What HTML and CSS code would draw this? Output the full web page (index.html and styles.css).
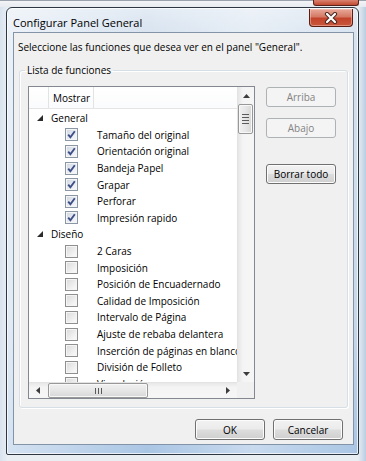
FILE: index.html
```html
<!DOCTYPE html>
<html lang="es">
  <head>
    <meta charset="UTF-8" />
    <title>Configurar Panel General</title>
    <link rel="stylesheet" href="styles.css">
  </head>
  <body>
    <div class="backbar"><span class="back-close"></span></div>
    <div class="dialog">
      <div class="titlebar">
        <span class="title">Configurar Panel General</span>
        <span class="close">
          <svg width="20" height="12" viewBox="0 0 20 12">
            <path d="M6 2 L14 10 M14 2 L6 10" stroke="#4a2a22" stroke-width="4.2" stroke-linecap="round" />
            <path d="M6 2 L14 10 M14 2 L6 10" stroke="#ffffff" stroke-width="2.2" stroke-linecap="round" />
          </svg>
        </span>
      </div>
      <div class="client">
        <p class="prompt">Seleccione las funciones que desea ver en el panel "General".</p>
        <fieldset class="group">
          <legend>Lista de funciones</legend>
          <div class="group-body">
            <div class="listview">
              <div class="lv-main">
                <div class="lv-header">
                  <span class="hd hd-icon"></span>
                  <span class="hd hd-show">Mostrar</span>
                  <span class="hd hd-rest"></span>
                </div>
                <div class="lv-rows">
                  <div class="row group-row"><span class="tri"><svg width="6" height="6" viewBox="0 0 6 6"><polygon points="6,0 6,6 0,6" fill="#2b2b2b" /></svg></span>General</div>
                  <div class="row"><span class="cb on"></span>Tamaño del original</div>
                  <div class="row"><span class="cb on"></span>Orientación original</div>
                  <div class="row"><span class="cb on"></span>Bandeja Papel</div>
                  <div class="row"><span class="cb on"></span>Grapar</div>
                  <div class="row"><span class="cb on"></span>Perforar</div>
                  <div class="row"><span class="cb on"></span>Impresión rapido</div>
                  <div class="row group-row"><span class="tri"><svg width="6" height="6" viewBox="0 0 6 6"><polygon points="6,0 6,6 0,6" fill="#2b2b2b" /></svg></span>Diseño</div>
                  <div class="row"><span class="cb"></span>2 Caras</div>
                  <div class="row"><span class="cb"></span>Imposición</div>
                  <div class="row"><span class="cb"></span>Posición de Encuadernado</div>
                  <div class="row"><span class="cb"></span>Calidad de Imposición</div>
                  <div class="row"><span class="cb"></span>Intervalo de Página</div>
                  <div class="row"><span class="cb"></span>Ajuste de rebaba delantera</div>
                  <div class="row"><span class="cb"></span>Inserción de páginas en blanco</div>
                  <div class="row"><span class="cb"></span>División de Folleto</div>
                  <div class="row"><span class="cb"></span>Vinculación</div>
                </div>
              </div>
              <div class="vscroll">
                <span class="sb-btn"><svg width="7" height="4" viewBox="0 0 7 4"><polygon points="3.5,0 7,4 0,4" fill="#3c3c3c" /></svg></span>
                <span class="vthumb"><i></i><i></i><i></i><i></i></span>
                <span class="sb-track"></span>
                <span class="sb-btn"><svg width="7" height="4" viewBox="0 0 7 4"><polygon points="0,0 7,0 3.5,4" fill="#3c3c3c" /></svg></span>
              </div>
              <div class="hscroll">
                <span class="sb-btn"><svg width="4" height="7" viewBox="0 0 4 7"><polygon points="0,3.5 4,0 4,7" fill="#3c3c3c" /></svg></span>
                <span class="hthumb"><i></i><i></i><i></i></span>
                <span class="sb-track"></span>
                <span class="sb-btn"><svg width="4" height="7" viewBox="0 0 4 7"><polygon points="0,0 4,3.5 0,7" fill="#3c3c3c" /></svg></span>
              </div>
              <div class="corner"></div>
            </div>
            <div class="side-buttons">
              <span class="btn disabled up">Arriba</span>
              <span class="btn disabled down">Abajo</span>
              <span class="btn clear">Borrar todo</span>
            </div>
          </div>
        </fieldset>
        <div class="footer">
          <span class="btn">OK</span>
          <span class="btn">Cancelar</span>
        </div>
      </div>
    </div>
  </body>
</html>
```

FILE: styles.css
```css
* {
  margin: 0;
  padding: 0;
  box-sizing: border-box;
}

body {
  width: 366px;
  height: 461px;
  overflow: hidden;
  font-family: "Open Sans", sans-serif;
  font-size: 10px;
  color: #000;
  background: linear-gradient(90deg, #d9e3ee 0, #e9eef3 8px, #e9eef3 358px, #b9cde2 100%);
}

.backbar {
  height: 7px;
  display: flex;
  justify-content: flex-end;
  padding-right: 7px;
  background: linear-gradient(#f2f4f6, #e7ebef);
  border-top: 1px solid #9aa3ad;
}

.back-close {
  width: 46px;
  height: 6px;
  margin-top: -1px;
  border: 1px solid #5a2218;
  border-top: none;
  border-radius: 0 0 3px 3px;
  background: linear-gradient(#d9826f, #c24a31);
}

/* window frame */
.dialog {
  margin-left: 6px;
  width: 353px;
  height: 448px;
  border: 1px solid #2e3741;
  border-radius: 6px 6px 2px 2px;
  padding: 0 4px 9px 6px;
  background: linear-gradient(90deg, rgba(255,255,255,0.5), rgba(255,255,255,0) 40%, rgba(255,255,255,0.35) 70%, rgba(255,255,255,0)),
    linear-gradient(#e3ebf4 0, #d6e2ef 30px, #c7d8ea 70%, #a9c5e4 100%);
  box-shadow: inset 0 0 0 1px rgba(255,255,255,0.7);
}

.titlebar {
  height: 24px;
  display: flex;
  align-items: flex-start;
  justify-content: space-between;
}

.title {
  font-size: 11px;
  line-height: 14px;
  margin-top: 8px;
  color: #000;
}

.close {
  width: 44px;
  height: 18px;
  margin-top: 1px;
  margin-right: 1px;
  display: flex;
  align-items: center;
  justify-content: center;
  border: 1px solid #5b1d12;
  border-top: none;
  border-radius: 0 0 4px 4px;
  background: linear-gradient(#e9a99b 0, #d47a65 45%, #c2432a 55%, #c8583c 100%);
  box-shadow: inset 0 0 0 1px rgba(255,210,200,0.45);
}

.client {
  height: 413px;
  border: 1px solid #8394a8;
  background: #f0f0f0;
  padding: 7px 5px 0 5px;
}

.prompt {
  line-height: 14px;
  margin-left: -1px;
  white-space: nowrap;
}

.group {
  margin-top: 9px;
  border: 1px solid #d5dfe5;
  border-radius: 3px;
  padding: 9px 11px 8px 8px;
  box-shadow: inset 1px 1px 0 #fff, 1px 1px 0 #fff;
}

.group legend {
  line-height: 14px;
  padding: 0 2px;
  margin-left: -3px;
}

.group-body {
  display: flex;
  gap: 11px;
}

/* list view */
.listview {
  width: 227px;
  height: 313px;
  border: 1px solid #828790;
  background: #fff;
  display: grid;
  grid-template-columns: 208px 17px;
  grid-template-rows: 295px 16px;
}

.lv-main {
  overflow: hidden;
}

.lv-header {
  height: 22px;
  display: flex;
  border-bottom: 1px solid #e5e5e5;
  background: linear-gradient(#fff, #fafbfc);
}

.hd {
  border-right: 1px solid #e2e3e4;
  line-height: 22px;
}

.hd-icon {
  width: 20px;
}

.hd-show {
  width: 45px;
  padding-left: 4px;
}

.hd-rest {
  flex: 1;
  border-right: none;
}

.lv-rows {
  padding-top: 1px;
}

.row {
  height: 16.6px;
  display: flex;
  align-items: center;
  white-space: nowrap;
  padding-left: 36px;
}

.group-row {
  padding-left: 8px;
}

.tri {
  width: 14px;
  display: flex;
  align-items: center;
  padding-bottom: 1px;
}

.cb {
  width: 13px;
  height: 13px;
  margin-right: 19px;
  flex-shrink: 0;
  border: 1px solid #8f8f8f;
  background: linear-gradient(135deg, #d9d9d9, #f6f6f6 80%);
  box-shadow: inset 0 0 0 1px #f5f5f5;
}

.cb.on {
  border-color: #8c97a6;
  background: url("data:image/svg+xml;utf8,<svg xmlns='http://www.w3.org/2000/svg' width='11' height='11'><path d='M2.2 5.6 L4.4 8.2 L8.8 2.2' stroke='%233d4f86' stroke-width='1.9' fill='none'/></svg>") center no-repeat,
    linear-gradient(135deg, #cfd6e2, #f2f4f8 80%);
}

/* scrollbars */
.vscroll,
.hscroll {
  display: flex;
  background: linear-gradient(90deg, #e6e6e6, #f4f4f4 30%, #f6f6f6);
}

.vscroll {
  flex-direction: column;
  border-left: 1px solid #e3e3e3;
}

.hscroll {
  background: linear-gradient(#e8e8e8, #f4f4f4 30%, #f6f6f6);
  border-top: 1px solid #e3e3e3;
}

.sb-btn {
  display: flex;
  align-items: center;
  justify-content: center;
  flex-shrink: 0;
}

.vscroll .sb-btn {
  height: 17px;
}

.hscroll .sb-btn {
  width: 18px;
}

.sb-track {
  flex: 1;
}

.vthumb,
.hthumb {
  display: flex;
  align-items: center;
  justify-content: center;
  border: 1px solid #989898;
  border-radius: 2px;
  box-shadow: inset 0 0 0 1px #f8f8f8;
}

.vthumb {
  height: 30px;
  margin: 0 1px 0 0;
  flex-direction: column;
  gap: 2px;
  background: linear-gradient(90deg, #f1f1f1, #e6e6e6 50%, #d7d7d7);
}

.vthumb i {
  width: 7px;
  height: 1px;
  background: #5a5a5a;
}

.hthumb {
  width: 100px;
  margin-left: 1px;
  gap: 2px;
  background: linear-gradient(#f1f1f1, #e6e6e6 50%, #d7d7d7);
}

.hthumb i {
  width: 1px;
  height: 6px;
  background: #5a5a5a;
}

.corner {
  background: #f0f0f0;
}

/* buttons */
.side-buttons {
  display: flex;
  flex-direction: column;
  padding-top: 1px;
}

.btn {
  width: 70px;
  height: 20px;
  display: flex;
  align-items: center;
  justify-content: center;
  border: 1px solid #707070;
  border-radius: 3px;
  background: linear-gradient(#f2f2f2 0, #ebebeb 48%, #dddddd 52%, #cfcfcf 100%);
  box-shadow: inset 0 0 0 1px #fcfcfc;
}

.btn.disabled {
  border-color: #adb2b5;
  background: #f4f4f4;
  color: #838383;
  box-shadow: none;
}

.down {
  margin-top: 11px;
}

.clear {
  margin-top: 26px;
}

.footer {
  display: flex;
  justify-content: flex-end;
  gap: 8px;
  margin-top: 11px;
  padding-right: 5px;
}

.footer .btn {
  height: 21px;
}
```
